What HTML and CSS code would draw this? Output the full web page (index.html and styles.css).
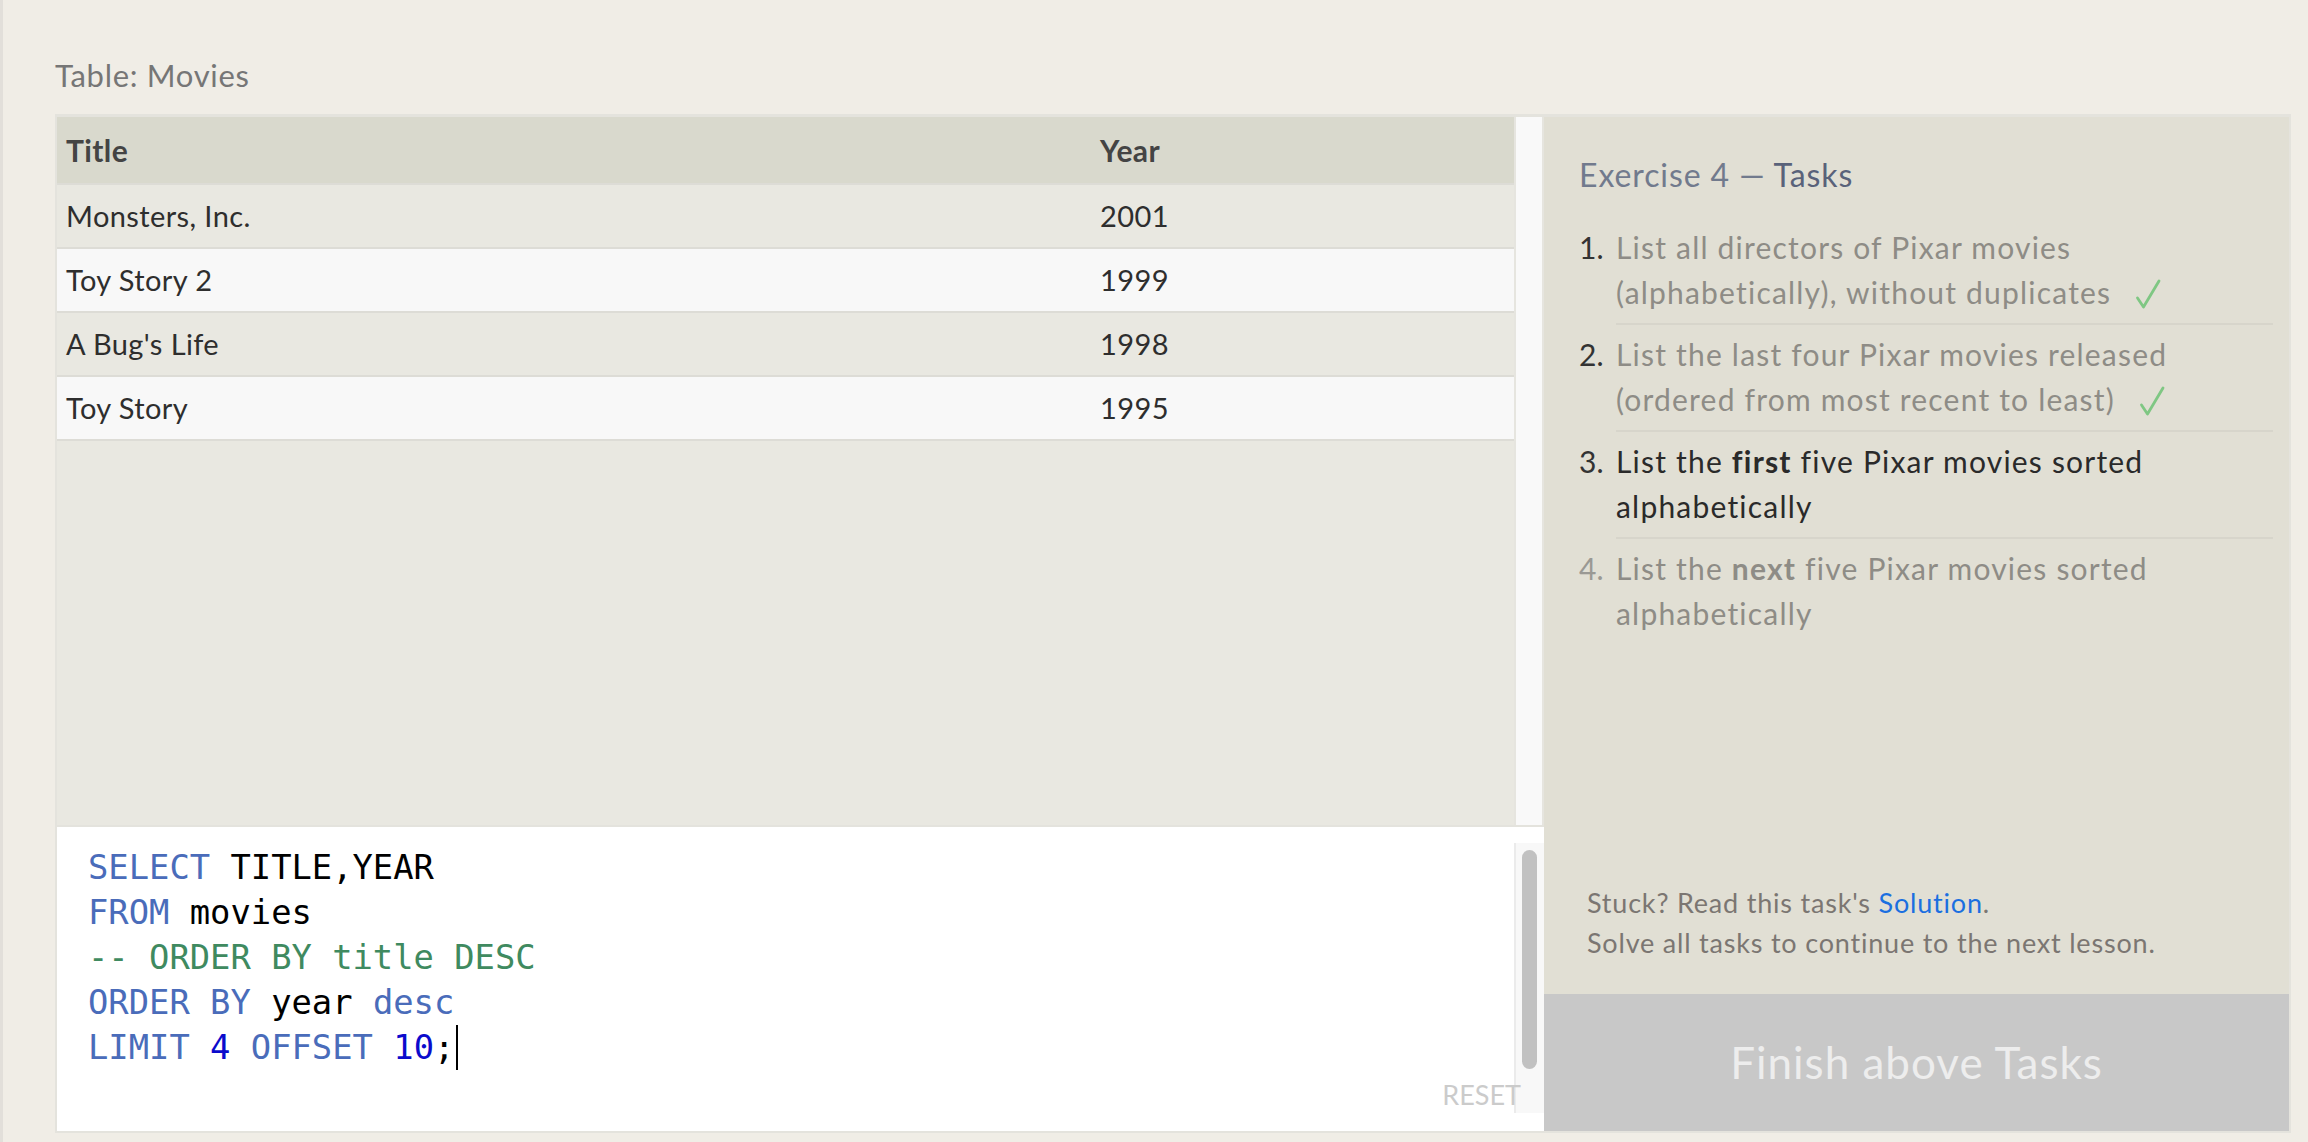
FILE: index.html
```html
<!DOCTYPE html>
<html>
<head>
<meta charset="utf-8">
<title>SQL Exercise</title>
<link rel="stylesheet" href="styles.css">
</head>
<body>
<div class="page">
  <div class="table-label">Table: Movies</div>
  <div class="workspace">
    <div class="left">
      <div class="results">
        <div class="table">
          <div class="row head"><div class="cell">Title</div><div class="cell">Year</div></div>
          <div class="row"><div class="cell">Monsters, Inc.</div><div class="cell">2001</div></div>
          <div class="row alt"><div class="cell">Toy Story 2</div><div class="cell">1999</div></div>
          <div class="row"><div class="cell">A Bug's Life</div><div class="cell">1998</div></div>
          <div class="row alt"><div class="cell">Toy Story</div><div class="cell">1995</div></div>
        </div>
        <div class="gutter"></div>
      </div>
      <div class="editor">
<pre class="code"><span class="kw">SELECT</span> TITLE,YEAR
<span class="kw">FROM</span> movies
<span class="cm">-- ORDER BY title DESC</span>
<span class="kw">ORDER BY</span> year <span class="kw">desc</span>
<span class="kw">LIMIT</span> <span class="nm">4</span> <span class="kw">OFFSET</span> <span class="nm">10</span>;<span class="cursor"></span></pre>
        <div class="scrollbar"><div class="thumb"></div></div>
        <div class="reset">RESET</div>
      </div>
    </div>
    <div class="right">
      <div class="tasks">
        <h2 class="ex-title">Exercise 4 — <span>Tasks</span></h2>
        <ol class="task-list">
          <li class="task done"><span class="num">1.</span><div class="body">List all directors of Pixar movies<br>(alphabetically), without duplicates<svg class="check" width="26" height="30" viewBox="0 0 26 30"><path d="M2.5 19 L8.5 28 L24 2" fill="none" stroke="#7fc783" stroke-width="2.8" stroke-linecap="round" stroke-linejoin="round"/></svg></div></li>
          <li class="task done"><span class="num">2.</span><div class="body">List the last four Pixar movies released<br>(ordered from most recent to least)<svg class="check" width="26" height="30" viewBox="0 0 26 30"><path d="M2.5 19 L8.5 28 L24 2" fill="none" stroke="#7fc783" stroke-width="2.8" stroke-linecap="round" stroke-linejoin="round"/></svg></div></li>
          <li class="task current"><span class="num">3.</span><div class="body">List the <b>first</b> five Pixar movies sorted<br>alphabetically</div></li>
          <li class="task todo"><span class="num">4.</span><div class="body">List the <b>next</b> five Pixar movies sorted<br>alphabetically</div></li>
        </ol>
      </div>
      <div class="help">
        <div>Stuck? Read this task's <a href="#">Solution</a>.</div>
        <div>Solve all tasks to continue to the next lesson.</div>
      </div>
      <div class="finish">Finish above Tasks</div>
    </div>
  </div>
</div>
</body>
</html>
```

FILE: styles.css
```css
html {
  background: #f0ede6;
}
body {
  margin: 0;
  min-height: 100vh;
  box-sizing: border-box;
  border-left: 3px solid #e2dfda;
  background: #f0ede6;
  font-family: Lato, "Open Sans", sans-serif;
}
.page {
  padding: 57px 17px 0 52px;
}
.table-label {
  font-size: 31px;
  line-height: 36px;
  letter-spacing: 0.7px;
  color: #767676;
  margin-bottom: 21px;
}
.workspace {
  display: flex;
  border: 2px solid #e4e3dd;
  border-top-width: 3px;
  height: 1014px;
}
.left {
  width: 1487px;
  flex: none;
  display: flex;
  flex-direction: column;
}
.results {
  height: 708px;
  display: flex;
  border-bottom: 2px solid #e4e3dd;
  background: #e9e8e1;
}
.table {
  flex: 1;
}
.row {
  display: grid;
  grid-template-columns: 1034px 1fr;
  align-items: center;
  height: 62px;
  padding-bottom: 1px;
  box-sizing: content-box;
  border-bottom: 2px solid #dddcd6;
  font-size: 29px;
  letter-spacing: 0.4px;
  color: #2e2e2e;
}
.row:not(.head) {
  height: 61px;
}
.row.head {
  height: 65px;
  background: #d9d9cd;
  font-weight: 700;
  font-size: 30px;
  color: #444;
}
.row.alt {
  background: #f8f8f8;
}
.cell {
  padding-left: 9px;
}
.gutter {
  width: 26px;
  background: #f9f9f9;
  border-left: 2px solid #e6e5df;
  border-right: 2px solid #e6e5df;
}
.editor {
  flex: 1;
  background: #fff;
  position: relative;
}
.code {
  margin: 0;
  padding: 18px 0 0 31px;
  font-family: "DejaVu Sans Mono", monospace;
  font-size: 33.8px;
  line-height: 45px;
  color: #000;
}
.kw {
  color: #4a6cba;
}
.cm {
  color: #3f8a60;
}
.nm {
  color: #0b0bcc;
}
.cursor {
  display: inline-block;
  width: 2px;
  height: 45px;
  margin-left: 2px;
  background: #000;
  vertical-align: top;
}
.scrollbar {
  position: absolute;
  right: 0;
  top: 16px;
  bottom: 18px;
  width: 28px;
  background: #f8f8f8;
  border-left: 2px solid #ebebeb;
}
.thumb {
  position: absolute;
  left: 6px;
  top: 7px;
  width: 15px;
  height: 219px;
  border-radius: 8px;
  background: #c1c1c1;
}
.reset {
  position: absolute;
  right: 23px;
  bottom: 21px;
  font-size: 27px;
  line-height: 30px;
  color: #cbcbcb;
  z-index: 1;
}
.right {
  flex: 1;
  background: #e1dfd4;
  display: flex;
  flex-direction: column;
}
.tasks {
  flex: 1;
  padding: 38px 16px 0 35px;
}
.ex-title {
  margin: 0 0 23px;
  font-size: 32px;
  line-height: 40px;
  font-weight: 400;
  letter-spacing: 0.9px;
  color: #717a8d;
}
.ex-title span {
  color: #59627a;
}
.task-list {
  list-style: none;
  margin: 0;
  padding: 0;
}
.task {
  display: flex;
  font-size: 30px;
  line-height: 45px;
  letter-spacing: 1.2px;
  color: #8e8c86;
}
.task .num {
  width: 37px;
  flex: none;
  padding-top: 7px;
  letter-spacing: 0;
  color: #333;
}
.task .body {
  flex: 1;
  padding: 7px 0 8px;
  border-bottom: 2px solid #d7d5cb;
}
.task:last-child .body {
  border-bottom: none;
}
.task.current .body {
  color: #2a2a2a;
}
.task.todo .num {
  color: #9a9994;
}
.check {
  margin-left: 24px;
  vertical-align: -5px;
}
.help {
  padding: 0 0 31px 43px;
  font-size: 27px;
  line-height: 40px;
  letter-spacing: 0.8px;
  color: #7b7672;
}
.help a {
  color: #1b6fe0;
  text-decoration: none;
}
.finish {
  height: 137px;
  background: #c8c8c8;
  color: #ededed;
  font-size: 44px;
  line-height: 137px;
  letter-spacing: 1px;
  text-align: center;
}
```
